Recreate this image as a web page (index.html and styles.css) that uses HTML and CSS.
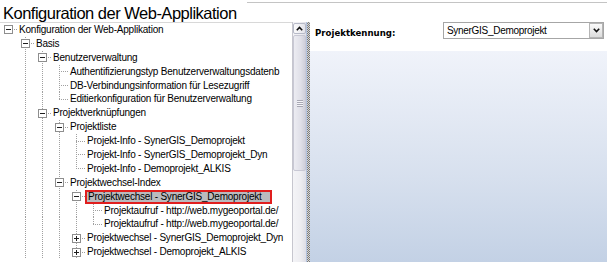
FILE: index.html
```html
<!DOCTYPE html>
<html lang="de">
<head>
<meta charset="utf-8">
<title>Konfiguration der Web-Applikation</title>
<link rel="stylesheet" href="styles.css">
</head>
<body>
<div class="window">
  <div class="header">
    <h1 class="title">Konfiguration der Web-Applikation</h1>
    <div class="header-line"></div>
  </div>
  <div class="main">
    <div class="tree-pane">
      <div class="row"><span class="c h"><svg class="box" width="9" height="9" viewBox="0 0 9 9"><rect x="0.5" y="0.5" width="8" height="8" fill="#fff" stroke="#8e8e8e"/><path d="M2 4.5H7" stroke="#1e1e1e"/></svg></span><span class="label">Konfiguration der Web-Applikation</span></div>
      <div class="row"><span class="c"></span><span class="c t"><svg class="box" width="9" height="9" viewBox="0 0 9 9"><rect x="0.5" y="0.5" width="8" height="8" fill="#fff" stroke="#8e8e8e"/><path d="M2 4.5H7" stroke="#1e1e1e"/></svg></span><span class="label">Basis</span></div>
      <div class="row"><span class="c"></span><span class="c v"></span><span class="c t"><svg class="box" width="9" height="9" viewBox="0 0 9 9"><rect x="0.5" y="0.5" width="8" height="8" fill="#fff" stroke="#8e8e8e"/><path d="M2 4.5H7" stroke="#1e1e1e"/></svg></span><span class="label">Benutzerverwaltung</span></div>
      <div class="row"><span class="c"></span><span class="c v"></span><span class="c v"></span><span class="c t"></span><span class="label">Authentifizierungstyp Benutzerverwaltungsdatenb</span></div>
      <div class="row"><span class="c"></span><span class="c v"></span><span class="c v"></span><span class="c t"></span><span class="label">DB-Verbindungsinformation für Lesezugriff</span></div>
      <div class="row"><span class="c"></span><span class="c v"></span><span class="c v"></span><span class="c l"></span><span class="label">Editierkonfiguration für Benutzerverwaltung</span></div>
      <div class="row"><span class="c"></span><span class="c v"></span><span class="c t"><svg class="box" width="9" height="9" viewBox="0 0 9 9"><rect x="0.5" y="0.5" width="8" height="8" fill="#fff" stroke="#8e8e8e"/><path d="M2 4.5H7" stroke="#1e1e1e"/></svg></span><span class="label">Projektverknüpfungen</span></div>
      <div class="row"><span class="c"></span><span class="c v"></span><span class="c v"></span><span class="c t"><svg class="box" width="9" height="9" viewBox="0 0 9 9"><rect x="0.5" y="0.5" width="8" height="8" fill="#fff" stroke="#8e8e8e"/><path d="M2 4.5H7" stroke="#1e1e1e"/></svg></span><span class="label">Projektliste</span></div>
      <div class="row"><span class="c"></span><span class="c v"></span><span class="c v"></span><span class="c v"></span><span class="c t"></span><span class="label">Projekt-Info - SynerGIS_Demoprojekt</span></div>
      <div class="row"><span class="c"></span><span class="c v"></span><span class="c v"></span><span class="c v"></span><span class="c t"></span><span class="label">Projekt-Info - SynerGIS_Demoprojekt_Dyn</span></div>
      <div class="row"><span class="c"></span><span class="c v"></span><span class="c v"></span><span class="c v"></span><span class="c l"></span><span class="label">Projekt-Info - Demoprojekt_ALKIS</span></div>
      <div class="row"><span class="c"></span><span class="c v"></span><span class="c v"></span><span class="c t"><svg class="box" width="9" height="9" viewBox="0 0 9 9"><rect x="0.5" y="0.5" width="8" height="8" fill="#fff" stroke="#8e8e8e"/><path d="M2 4.5H7" stroke="#1e1e1e"/></svg></span><span class="label">Projektwechsel-Index</span></div>
      <div class="row"><span class="c"></span><span class="c v"></span><span class="c v"></span><span class="c v"></span><span class="c t"><svg class="box" width="9" height="9" viewBox="0 0 9 9"><rect x="0.5" y="0.5" width="8" height="8" fill="#fff" stroke="#8e8e8e"/><path d="M2 4.5H7" stroke="#1e1e1e"/></svg></span><span class="label sel">Projektwechsel - SynerGIS_Demoprojekt</span></div>
      <div class="row"><span class="c"></span><span class="c v"></span><span class="c v"></span><span class="c v"></span><span class="c v"></span><span class="c t"></span><span class="label">Projektaufruf - http://web.mygeoportal.de/</span></div>
      <div class="row"><span class="c"></span><span class="c v"></span><span class="c v"></span><span class="c v"></span><span class="c v"></span><span class="c l"></span><span class="label">Projektaufruf - http://web.mygeoportal.de/</span></div>
      <div class="row"><span class="c"></span><span class="c v"></span><span class="c v"></span><span class="c v"></span><span class="c t"><svg class="box" width="9" height="9" viewBox="0 0 9 9"><rect x="0.5" y="0.5" width="8" height="8" fill="#fff" stroke="#8e8e8e"/><path d="M2 4.5H7M4.5 2V7" stroke="#1e1e1e"/></svg></span><span class="label">Projektwechsel - SynerGIS_Demoprojekt_Dyn</span></div>
      <div class="row"><span class="c"></span><span class="c v"></span><span class="c v"></span><span class="c v"></span><span class="c t"><svg class="box" width="9" height="9" viewBox="0 0 9 9"><rect x="0.5" y="0.5" width="8" height="8" fill="#fff" stroke="#8e8e8e"/><path d="M2 4.5H7M4.5 2V7" stroke="#1e1e1e"/></svg></span><span class="label">Projektwechsel - Demoprojekt_ALKIS</span></div>
    </div>
    <div class="scrollbar">
      <div class="sb-btn"><svg width="7" height="5" viewBox="0 0 7 5"><path d="M0.8 4.2L3.5 1.5L6.2 4.2" fill="none" stroke="#111" stroke-width="1.6"/></svg></div>
      <div class="sb-thumb"><span class="grip"></span></div>
      <div class="sb-track"></div>
    </div>
    <div class="splitter"></div>
    <div class="right">
      <div class="topbar">
        <span class="field-label">Projektkennung:</span>
        <div class="select">
          <span class="select-text">SynerGIS_Demoprojekt</span>
          <span class="select-btn"><svg width="7" height="5" viewBox="0 0 7 5"><path d="M0.8 0.8L3.5 3.5L6.2 0.8" fill="none" stroke="#111" stroke-width="1.6"/></svg></span>
        </div>
      </div>
      <div class="content"></div>
    </div>
  </div>
</div>
</body>
</html>
```
FILE: styles.css
```css
:root {
  --dv: repeating-linear-gradient(to bottom, #a0a0a0 0 1px, transparent 1px 2px);
  --dh: repeating-linear-gradient(to right, #a0a0a0 0 1px, transparent 1px 2px);
}

html, body {
  margin: 0;
  padding: 0;
}

body {
  width: 607px;
  height: 262px;
  overflow: hidden;
  background: #fff;
  font-family: "Liberation Sans", Arial, sans-serif;
  color: #000;
}

.window {
  display: flex;
  flex-direction: column;
  height: 262px;
}

.header {
  display: flex;
  height: 22px;
  flex: none;
}

.title {
  margin: 0;
  padding: 5px 0 0 3px;
  font-size: 16.5px;
  line-height: 17px;
  font-weight: normal;
  letter-spacing: -0.5px;
  white-space: nowrap;
}

.header-line {
  flex: 1;
  height: 0;
  margin: 2px 0 0 10px;
  border-top: 1px solid #c4c4c4;
}

.main {
  flex: 1;
  display: flex;
  min-height: 0;
}

/* tree */
.tree-pane {
  width: 292px;
  flex: none;
  border-top: 1px solid #d8d8d8;
  overflow: hidden;
}

.row {
  display: flex;
  align-items: center;
  height: 13.9px;
  font-size: 10px;
  letter-spacing: -0.22px;
  white-space: nowrap;
}

.c {
  flex: none;
  width: 17px;
  height: 100%;
  display: flex;
  align-items: center;
  background-repeat: no-repeat;
}

.c .box {
  display: block;
  margin-left: 4px;
}

.v {
  background-image: var(--dv);
  background-size: 1px 100%;
  background-position: 8px 0;
}

.t {
  background-image: var(--dv), var(--dh);
  background-size: 1px 100%, 9px 1px;
  background-position: 8px 0, 8px 50%;
}

.l {
  background-image: var(--dv), var(--dh);
  background-size: 1px 50%, 9px 1px;
  background-position: 8px 0, 8px 50%;
}

.h {
  background-image: var(--dh);
  background-size: 9px 1px;
  background-position: 8px 50%;
}

.label {
  margin-left: 2px;
  line-height: 13.9px;
}

.label.sel {
  margin-left: 0;
  height: 100%;
  box-sizing: border-box;
  border: 2px solid #e01e1e;
  background: #bababe;
  padding: 0 8px 0 1px;
  line-height: 9.9px;
}

/* scrollbar */
.scrollbar {
  width: 14px;
  flex: none;
  box-sizing: border-box;
  border-left: 1px solid #c6c6ce;
  display: flex;
  flex-direction: column;
  background: linear-gradient(to right, #f4f4f7, #ededf1 60%, #dedee6);
}

.sb-btn {
  height: 11px;
  margin-top: 1px;
  box-sizing: border-box;
  border: 1px solid #b7bac8;
  border-radius: 2px;
  background: linear-gradient(to right, #fbfbfc, #e3e3ea);
  display: flex;
  align-items: center;
  justify-content: center;
}

.sb-thumb {
  height: 136px;
  margin-top: 1px;
  box-sizing: border-box;
  border: 1px solid #c8c8d4;
  border-radius: 2px;
  background: linear-gradient(to right, #ececf2, #e0e0e8 60%, #cfcfda);
  display: flex;
  align-items: center;
  justify-content: center;
}

.grip {
  width: 6px;
  height: 7px;
  background: repeating-linear-gradient(to bottom, #a8a8b4 0 1px, #f4f4f8 1px 2px);
}

.sb-track {
  flex: 1;
}

.splitter {
  width: 4px;
  flex: none;
  box-sizing: border-box;
  border-left: 1px solid #b2c2de;
  background: repeating-conic-gradient(#7c7c7c 0 25%, #d6d6d6 0 50%) 0 0 / 2px 2px;
}

/* right panel */
.right {
  flex: 1;
  display: flex;
  flex-direction: column;
  min-width: 0;
}

.topbar {
  height: 29px;
  flex: none;
  display: flex;
  align-items: flex-start;
  padding-left: 5px;
  background: #fff;
}

.field-label {
  font-family: "DejaVu Sans", Verdana, sans-serif;
  font-weight: bold;
  font-size: 8.6px;
  line-height: 10px;
  padding-top: 6px;
  white-space: nowrap;
}

.select {
  margin-left: auto;
  margin-right: 3px;
  width: 161px;
  height: 17px;
  box-sizing: border-box;
  border: 1px solid #a6a6a6;
  display: flex;
  align-items: center;
  background: #fff;
}

.select-text {
  flex: 1;
  padding-left: 3px;
  font-size: 10px;
  letter-spacing: -0.3px;
  white-space: nowrap;
}

.select-btn {
  width: 14px;
  height: 15px;
  box-sizing: border-box;
  border: 1px solid #b5b5b5;
  background: linear-gradient(#fafafa, #dcdcdc);
  display: flex;
  align-items: center;
  justify-content: center;
}

.content {
  flex: 1;
  background: linear-gradient(#f0f3fa 0%, #d7e0ee 60%, #c3d1e5 100%);
}
```
